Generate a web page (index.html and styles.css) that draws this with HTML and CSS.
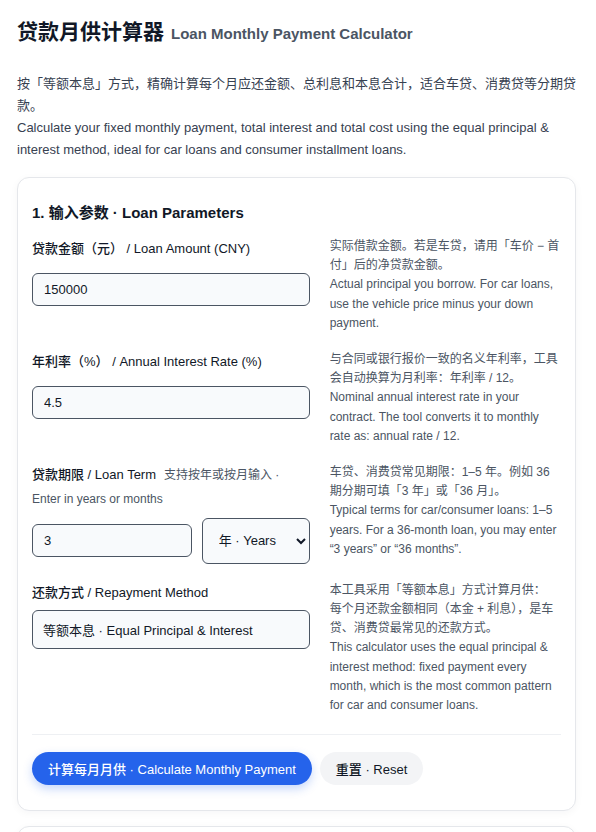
FILE: index.html
```html
<!doctype html>
<html lang="zh-CN">

<head>
    <meta charset="utf-8">
    <title>贷款月供计算器 Loan Monthly Payment Calculator</title>
    <link rel="stylesheet" href="styles.css">
</head>

<body>
<div id="page">
    <h1 class="title">贷款月供计算器<span class="title-en">Loan Monthly Payment Calculator</span></h1>
    <p class="intro">
        按「等额本息」方式，精确计算每个月应还金额、总利息和本息合计，适合车贷、消费贷等分期贷款。<br>
        Calculate your fixed monthly payment, total interest and total cost using the equal principal &amp; interest method, ideal for car loans and consumer installment loans.
    </p>

    <form id="form" class="card" onsubmit="calculate(); return false;" autocomplete="off">
        <div class="card-title">1. 输入参数 · Loan Parameters</div>

        <div class="row">
            <div class="field">
                <label class="label" for="amount">贷款金额（元） / Loan Amount (CNY)</label>
                <div class="control">
                    <input class="input" id="amount" type="number" value="150000">
                </div>
            </div>
            <div class="help">
                实际借款金额。若是车贷，请用「车价 − 首付」后的净贷款金额。<br>
                Actual principal you borrow. For car loans, use the vehicle price minus your down payment.
            </div>
        </div>

        <div class="row">
            <div class="field">
                <label class="label" for="rate">年利率（%） / Annual Interest Rate (%)</label>
                <div class="control">
                    <input class="input" id="rate" type="number" step="0.01" value="4.5">
                </div>
            </div>
            <div class="help">
                与合同或银行报价一致的名义年利率，工具会自动换算为月利率：年利率 / 12。<br>
                Nominal annual interest rate in your contract. The tool converts it to monthly rate as: annual rate / 12.
            </div>
        </div>

        <div class="row">
            <div class="field">
                <label class="label" for="term">贷款期限 / Loan Term<span class="hint">支持按年或按月输入 · Enter in years or months</span></label>
                <div class="control">
                    <input class="input" id="term" type="number" value="3">
                    <select class="select" id="unit">
                        <option value="year">年 · Years</option>
                        <option value="month">月 · Months</option>
                    </select>
                </div>
            </div>
            <div class="help">
                车贷、消费贷常见期限：1–5 年。例如 36 期分期可填「3 年」或「36 月」。<br>
                Typical terms for car/consumer loans: 1–5 years. For a 36-month loan, you may enter “3 years” or “36 months”.
            </div>
        </div>

        <div class="row">
            <div class="field">
                <label class="label" for="method">还款方式 / Repayment Method</label>
                <input class="input input-fixed" id="method" readonly value="等额本息 · Equal Principal &amp; Interest">
            </div>
            <div class="help">
                本工具采用「等额本息」方式计算月供：<br>
                每个月还款金额相同（本金 + 利息），是车贷、消费贷最常见的还款方式。<br>
                This calculator uses the equal principal &amp; interest method: fixed payment every month, which is the most common pattern for car and consumer loans.
            </div>
        </div>

        <div class="actions">
            <button type="submit" class="btn btn-primary">计算每月月供 · Calculate Monthly Payment</button>
            <button type="button" class="btn btn-light" onclick="resetForm()">重置 · Reset</button>
        </div>
    </form>

    <div class="card">
        <div class="card-title">2. 计算结果 · Results</div>
        <div class="result"><span>每月月供 / Monthly Payment</span><b id="monthly">—</b></div>
        <div class="result"><span>总利息 / Total Interest</span><b id="interest">—</b></div>
        <div class="result"><span>本息合计 / Total Cost</span><b id="total">—</b></div>
    </div>
</div>
<script>
    function money(v) {
        return "¥ " + v.toFixed(2).replace(/\B(?=(\d{3})+(?!\d))/g, ",");
    }

    function calculate() {
        var amount = +document.getElementById('amount').value;
        var rate = +document.getElementById('rate').value / 100 / 12;
        var n = +document.getElementById('term').value;
        if (document.getElementById('unit').value === 'year') n = n * 12;
        if (!amount || !n) return;

        var monthly = rate === 0 ? amount / n
            : amount * rate * Math.pow(1 + rate, n) / (Math.pow(1 + rate, n) - 1);

        document.getElementById('monthly').textContent = money(monthly);
        document.getElementById('interest').textContent = money(monthly * n - amount);
        document.getElementById('total').textContent = money(monthly * n);
    }

    function resetForm() {
        document.getElementById('amount').value = 150000;
        document.getElementById('rate').value = 4.5;
        document.getElementById('term').value = 3;
        document.getElementById('unit').value = 'year';
        ['monthly', 'interest', 'total'].forEach(function (id) {
            document.getElementById(id).textContent = '—';
        });
    }
</script>
</body>

</html>
```

FILE: styles.css
```css
body {
    margin: 0;
    font-family: "Liberation Sans", "Noto Sans CJK SC", sans-serif;
    color: #111827;
    background: #ffffff;
}

#page {
    max-width: 559px;
    padding: 18px 0 40px 17px;
}

.title {
    margin: 0 0 26px;
    font-size: 21px;
    line-height: 27px;
    font-weight: 700;
}

.title-en {
    margin-left: 7px;
    font-size: 15px;
    color: #4b5563;
}

.intro {
    margin: 0 0 16px;
    font-size: 13px;
    line-height: 22px;
    color: #374151;
}

.card {
    display: block;
    border: 1px solid #e5e7eb;
    border-radius: 12px;
    background: #ffffff;
    padding: 24px 14px 25px;
    margin-bottom: 15px;
    box-shadow: 0 2px 8px rgba(15, 23, 42, 0.04);
}

.card-title {
    font-size: 15px;
    line-height: 21px;
    font-weight: 600;
    margin-bottom: 14px;
}

.row {
    display: grid;
    grid-template-columns: 1.2fr 1fr;
    column-gap: 20px;
    align-items: start;
    margin-bottom: 17px;
}

.label {
    display: block;
    font-size: 13px;
    line-height: 23.4px;
    font-weight: 500;
    margin-bottom: 6px;
}

.hint {
    margin-left: 8px;
    font-size: 12px;
    font-weight: 400;
    color: #4b5563;
}

.control {
    display: flex;
    align-items: center;
    gap: 10px;
    min-height: 46px;
}

.input {
    box-sizing: border-box;
    width: 100%;
    min-width: 0;
    height: 33px;
    padding: 0 11px;
    border: 1px solid #4b5563;
    border-radius: 6px;
    background: #f8fafc;
    font-family: inherit;
    font-size: 13px;
    color: #111827;
    outline: none;
}

.input::-webkit-outer-spin-button,
.input::-webkit-inner-spin-button {
    -webkit-appearance: none;
    margin: 0;
}

.input-fixed {
    height: 39px;
    padding: 0 10px;
}

.select {
    box-sizing: border-box;
    flex: 0 0 107px;
    height: 46px;
    padding: 0 6px 0 12px;
    border: 1px solid #4b5563;
    border-radius: 6px;
    background: #f8fafc;
    font-family: inherit;
    font-size: 13px;
    color: #111827;
}

.help {
    font-size: 12px;
    line-height: 19.2px;
    color: #4b5563;
}

.actions {
    display: flex;
    gap: 8px;
    margin-top: 19px;
    padding-top: 17px;
    border-top: 1px solid #eef0f3;
}

.btn {
    height: 33px;
    padding: 0 16px;
    border: none;
    border-radius: 999px;
    font-family: inherit;
    font-size: 13px;
    font-weight: 500;
    cursor: pointer;
}

.btn-primary {
    background: #2563eb;
    color: #ffffff;
    box-shadow: 0 4px 10px rgba(37, 99, 235, 0.25);
}

.btn-light {
    background: #f3f4f6;
    color: #111827;
}

.btn:hover {
    opacity: 0.9;
}

.result {
    display: flex;
    justify-content: space-between;
    font-size: 13px;
    line-height: 32px;
    border-bottom: 1px solid #f1f5f9;
}
```
